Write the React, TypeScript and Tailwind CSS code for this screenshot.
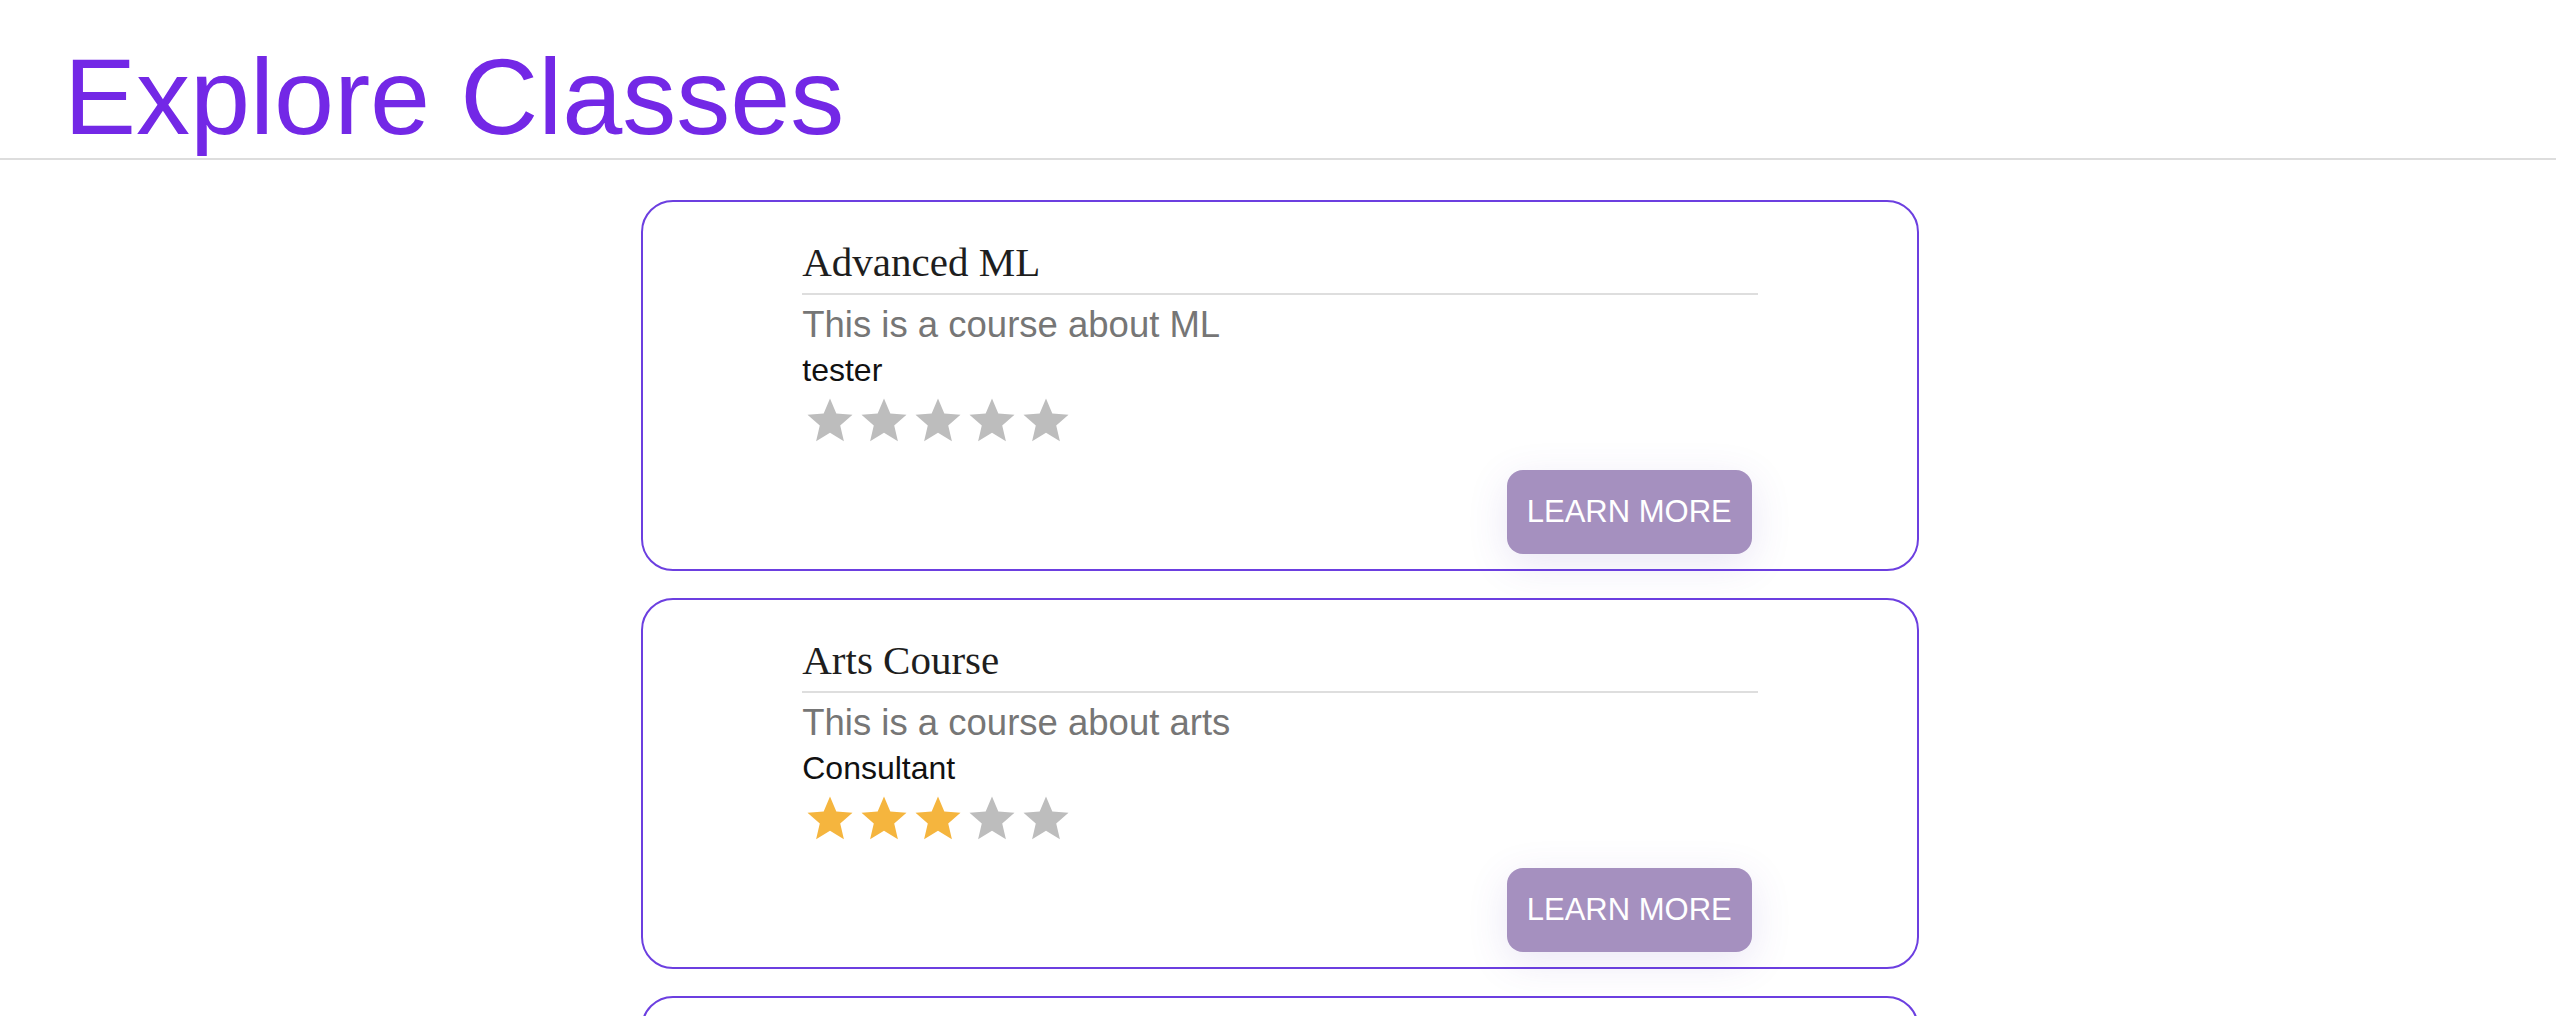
import React from "react";

type Course = {
  title: string;
  description: string;
  instructor: string;
  rating: number;
};

const courses: Course[] = [
  { title: "Advanced ML", description: "This is a course about ML", instructor: "tester", rating: 0 },
  { title: "Arts Course", description: "This is a course about arts", instructor: "Consultant", rating: 3 },
  { title: "Web Basics", description: "This is a course about the web", instructor: "tester", rating: 4 },
];

const Star = ({ filled }: { filled: boolean }) => (
  <svg viewBox="0 0 24 24" className="w-[54px] h-[54px] shrink-0" aria-hidden="true">
    <path
      d="M12 17.27L18.18 21l-1.64-7.03L22 9.24l-7.19-.61L12 2 9.19 8.63 2 9.24l5.46 4.73L5.82 21z"
      fill={filled ? "#f5b53e" : "#bdbdbd"}
    />
  </svg>
);

const CourseCard = ({ course }: { course: Course }) => (
  <div className="w-[1278px] ml-[641px] border-2 border-[#6c3fe0] rounded-[32px] bg-white">
    <div className="w-3/4 mx-auto pt-[37px] pb-[15px]">
      {/* Titel */}
      <h2 className="font-['Liberation_Serif',serif] text-[41px] leading-[46px] text-[#1e1e1e] pb-[8px] border-b-2 border-[#dedede]">
        {course.title}
      </h2>
      <p className="mt-[10px] text-[36.5px] leading-[40px] text-[#767676]">{course.description}</p>
      <p className="mt-[7px] text-[32px] leading-[37px] text-[#111]">{course.instructor}</p>
      <div className="flex mt-[5px] ml-px">
        {[1, 2, 3, 4, 5].map((i) => (
          <Star key={i} filled={i <= course.rating} />
        ))}
      </div>
      <div className="flex justify-end mt-[22px] mr-[6px]">
        <button className="h-[84px] px-[20px] rounded-[16px] bg-[#a590bf] text-white text-[31px] uppercase shadow-[0_10px_40px_rgba(90,60,180,0.13)]">
          Learn More
        </button>
      </div>
    </div>
  </div>
);

export default function App() {
  return (
    <div className="min-h-screen bg-white font-['Liberation_Sans',Arial,sans-serif]">
      <header className="pt-[36px] pl-[64px] border-b-2 border-[#dddddd]">
        <h1 className="text-[108px] leading-[122px] text-[#7328e6]">Explore Classes</h1>
      </header>
      <main className="flex flex-col gap-[27px] pt-[40px] pb-[40px]">
        {courses.map((c) => (
          <CourseCard key={c.title} course={c} />
        ))}
      </main>
    </div>
  );
}
